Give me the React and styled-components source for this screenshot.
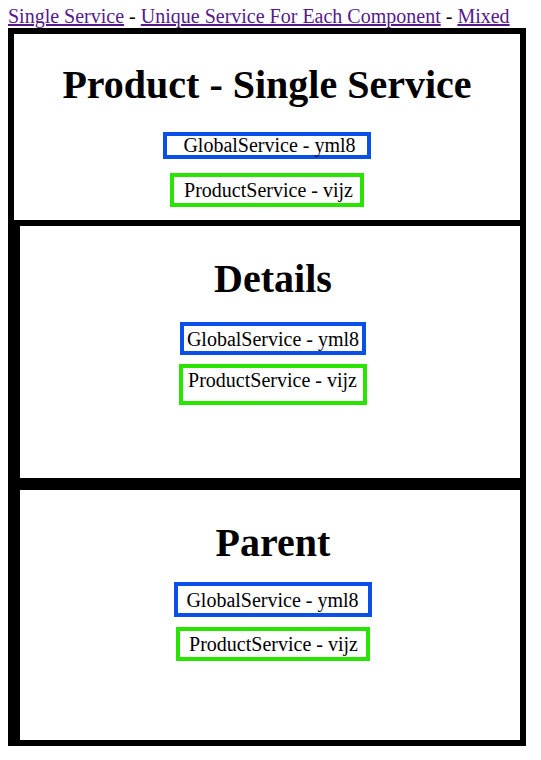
import styled, { createGlobalStyle } from "styled-components";

const GlobalStyle = createGlobalStyle`
  body {
    margin: 0;
    font-family: "Liberation Serif", "Times New Roman", serif;
    font-size: 20px;
    background: #fff;
  }
`;

const Page = styled.div`
  padding: 5px 8px 0;
`;

const Nav = styled.nav`
  line-height: 23px;
  color: #000;
`;

const NavLink = styled.a`
  color: #551a8b;
  text-decoration: underline;
`;

const Frame = styled.div`
  box-sizing: border-box;
  width: 518px;
  height: 718px;
  border: 6px solid #000;
  overflow: hidden;
`;

const Section = styled.div`
  display: flex;
  flex-direction: column;
  align-items: center;
  padding-bottom: ${(props) => props.$bottom || 0}px;
`;

const Panel = styled(Section)`
  width: 100%;
  height: ${(props) => props.$height}px;
  border: 6px solid #000;
`;

const Title = styled.h1`
  font-size: 40px;
  font-weight: bold;
  line-height: 46px;
  margin: ${(props) => props.$top}px 0 ${(props) => props.$bottom}px;
  text-align: center;
`;

const ServiceBox = styled.div`
  border: 4px solid ${(props) => (props.$kind === "global" ? "#0a50e8" : "#28e400")};
  line-height: ${(props) => props.$line || 20}px;
  padding: ${(props) => props.$pad};
  margin-bottom: ${(props) => props.$gap || 0}px;
  color: #000;
  white-space: nowrap;
`;

function Services({ global, product, gap, line }) {
  return (
    <>
      <ServiceBox $kind="global" $pad={global} $gap={gap} $line={line}>
        GlobalService - yml8
      </ServiceBox>
      <ServiceBox $kind="product" $pad={product}>
        ProductService - vijz
      </ServiceBox>
    </>
  );
}

function App() {
  return (
    <Page>
      <GlobalStyle />
      <Nav>
        <NavLink href="#single">Single Service</NavLink> -{" "}
        <NavLink href="#unique">Unique Service For Each Component</NavLink> -{" "}
        <NavLink href="#mixed">Mixed</NavLink>
      </Nav>
      <Frame>
        <Section $bottom={13}>
          <Title $top={28} $bottom={24}>
            Product - Single Service
          </Title>
          <Services global="0 11px 0 16px" line={19} product="3px 7px 3px 10px" gap={14} />
        </Section>
        <Panel $height={252}>
          <Title $top={30} $bottom={20}>
            Details
          </Title>
          <Services global="3px 3px 2px 3px" product="2px 6px 11px 5px" gap={9} />
        </Panel>
        <Panel $height={300}>
          <Title $top={30} $bottom={16}>
            Parent
          </Title>
          <Services global="4px 9px 3px 8px" product="3px 8px 3px 9px" gap={10} />
        </Panel>
      </Frame>
    </Page>
  );
}

export default App;
